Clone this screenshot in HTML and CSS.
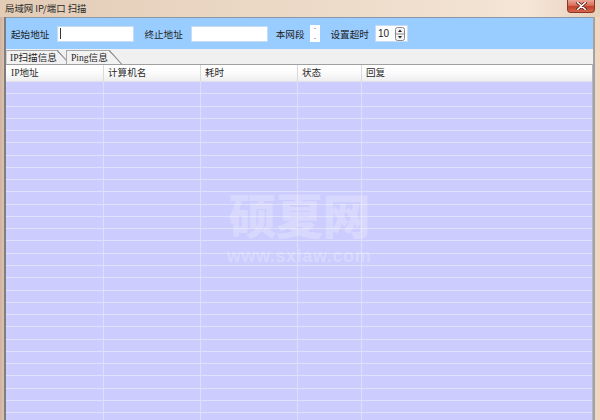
FILE: index.html
```html
<!DOCTYPE html>
<html>
<head>
<meta charset="utf-8">
<title>局域网 IP/端口 扫描</title>
<link rel="stylesheet" href="styles.css">
</head>
<body>
<div class="window">
  <div class="titlebar">
    <span class="title">局域网 IP/端口 扫描</span>
    <div class="close">
      <svg width="11" height="8" viewBox="0 0 11 8"><path d="M1.5 0.5 L9.5 7.5 M9.5 0.5 L1.5 7.5" stroke="#5a1a10" stroke-width="3" stroke-linecap="round"/><path d="M1.5 0.5 L9.5 7.5 M9.5 0.5 L1.5 7.5" stroke="#ffffff" stroke-width="1.6" stroke-linecap="round"/></svg>
    </div>
  </div>
  <div class="frame">
    <div class="client">
      <div class="toolbar">
        <span class="label">起始地址</span>
        <div class="field wide"><span class="caret"></span></div>
        <span class="label gap-l">终止地址</span>
        <div class="field wide"></div>
        <span class="label">本网段</span>
        <div class="mini-spin">
          <svg width="10" height="17" viewBox="0 0 10 17"><path d="M4 4 L5 3 L6 4 Z" fill="#6b6b6b"/><path d="M4 13 L5 14 L6 13 Z" fill="#6b6b6b"/></svg>
        </div>
        <span class="label gap-l2">设置超时</span>
        <div class="field num">
          <span class="num-val">10</span>
          <svg class="spin-btn" width="10" height="14" viewBox="0 0 10 14"><rect x="0.5" y="0.5" width="9" height="13" rx="2" fill="#f4f4f4" stroke="#8a8a8a"/><line x1="1" y1="7" x2="9" y2="7" stroke="#8a8a8a"/><path d="M3 5 L5 2.5 L7 5 Z" fill="#222"/><path d="M3 9 L5 11.5 L7 9 Z" fill="#222"/></svg>
        </div>
      </div>
      <div class="tabs">
        <div class="tab tab-first">IP扫描信息</div>
        <div class="tab tab-second">Ping信息</div>
      </div>
      <div class="grid">
        <div class="head">
          <div class="hc first">IP地址</div>
          <div class="hc">计算机名</div>
          <div class="hc">耗时</div>
          <div class="hc">状态</div>
          <div class="hc last">回复</div>
        </div>
        <div class="rows">
          <div class="row"><i></i><i></i><i></i><i></i><i></i></div>
          <div class="row"><i></i><i></i><i></i><i></i><i></i></div>
          <div class="row"><i></i><i></i><i></i><i></i><i></i></div>
          <div class="row"><i></i><i></i><i></i><i></i><i></i></div>
          <div class="row"><i></i><i></i><i></i><i></i><i></i></div>
          <div class="row"><i></i><i></i><i></i><i></i><i></i></div>
          <div class="row"><i></i><i></i><i></i><i></i><i></i></div>
          <div class="row"><i></i><i></i><i></i><i></i><i></i></div>
          <div class="row"><i></i><i></i><i></i><i></i><i></i></div>
          <div class="row"><i></i><i></i><i></i><i></i><i></i></div>
          <div class="row"><i></i><i></i><i></i><i></i><i></i></div>
          <div class="row"><i></i><i></i><i></i><i></i><i></i></div>
          <div class="row"><i></i><i></i><i></i><i></i><i></i></div>
          <div class="row"><i></i><i></i><i></i><i></i><i></i></div>
          <div class="row"><i></i><i></i><i></i><i></i><i></i></div>
          <div class="row"><i></i><i></i><i></i><i></i><i></i></div>
          <div class="row"><i></i><i></i><i></i><i></i><i></i></div>
          <div class="row"><i></i><i></i><i></i><i></i><i></i></div>
          <div class="row"><i></i><i></i><i></i><i></i><i></i></div>
          <div class="row"><i></i><i></i><i></i><i></i><i></i></div>
          <div class="row"><i></i><i></i><i></i><i></i><i></i></div>
          <div class="row"><i></i><i></i><i></i><i></i><i></i></div>
          <div class="row"><i></i><i></i><i></i><i></i><i></i></div>
          <div class="row"><i></i><i></i><i></i><i></i><i></i></div>
          <div class="row"><i></i><i></i><i></i><i></i><i></i></div>
          <div class="row"><i></i><i></i><i></i><i></i><i></i></div>
          <div class="row"><i></i><i></i><i></i><i></i><i></i></div>
          <div class="row"><i></i><i></i><i></i><i></i><i></i></div>
        </div>
        <div class="watermark">
          <div class="wm-big">硕夏网</div>
          <div class="wm-small">www.sxiaw.com</div>
        </div>
      </div>
    </div>
  </div>
</div>
</body>
</html>
```
FILE: styles.css
```css
html, body {
  margin: 0;
  padding: 0;
}
body {
  width: 600px;
  height: 420px;
  overflow: hidden;
  font-family: "Noto Sans CJK SC", sans-serif;
  font-size: 9.6px;
  color: #1e1e1e;
}
.window {
  width: 600px;
  height: 420px;
  display: flex;
  flex-direction: column;
  background: linear-gradient(to right, #cdb3a0 0px, #d9c0ad 3px, #e9d2bf 60%, #f1d7bf 100%);
}
.titlebar {
  height: 17px;
  display: flex;
  align-items: flex-start;
  background: linear-gradient(to right, #e3ccb6 0%, #ead7c4 40%, #f2e2d2 80%, #f5e6d8 88%, #e8d0ba 100%);
  flex-shrink: 0;
}
.title {
  margin-left: 5px;
  line-height: 17px;
  font-size: 9.4px;
  color: #2a2a2a;
}
.close {
  margin-left: auto;
  margin-right: 5px;
  width: 28px;
  height: 13px;
  box-sizing: border-box;
  border: 1px solid #8b3526;
  border-top: none;
  border-radius: 0 0 4px 4px;
  background: linear-gradient(to bottom, #e9a697 0%, #d8705a 45%, #c2412b 55%, #d5664c 100%);
  display: flex;
  align-items: center;
  justify-content: center;
}
.frame {
  flex: 1;
  display: flex;
  padding: 0 5px 0 4px;
  min-height: 0;
}
.client {
  flex: 1;
  display: flex;
  flex-direction: column;
  border-left: 2px solid #7e7e7e;
  border-right: 2px solid #a2a2a2;
  background: #f0f0f0;
  min-height: 0;
}
.toolbar {
  height: 32px;
  flex-shrink: 0;
  box-sizing: border-box;
  border-top: 1px solid #8d98a6;
  background: #99ccff;
  display: flex;
  align-items: center;
  padding-left: 5px;
}
.label {
  line-height: 14px;
  color: #1e1e1e;
  white-space: nowrap;
}
.field {
  height: 16px;
  box-sizing: border-box;
  background: #ffffff;
  border: 1px solid #c6dcf2;
  display: flex;
  align-items: center;
}
.wide {
  width: 77px;
  margin: 0 8px 0 8px;
}
.gap-l { margin-left: 2px; }
.gap-l2 { margin-left: 11px; }
.caret {
  width: 1px;
  height: 11px;
  margin-left: 2px;
  background: #333;
}
.mini-spin {
  width: 10px;
  height: 17px;
  margin-left: 5px;
  background: #ffffff;
  display: flex;
}
.num {
  width: 33px;
  height: 17px;
  margin-left: 6px;
  padding-left: 2px;
  justify-content: space-between;
  padding-right: 2px;
}
.num-val {
  font-family: "Liberation Sans", sans-serif;
  font-size: 10px;
  line-height: 14px;
  color: #222;
}
.spin-btn {
  display: block;
}
.tabs {
  height: 15px;
  flex-shrink: 0;
  display: flex;
  align-items: flex-end;
  background: #f0f0f0;
}
.tab {
  position: relative;
  height: 14px;
  box-sizing: border-box;
  border-top: 1px solid #a7a7a7;
  border-left: 1px solid #a7a7a7;
  background: #f2f2f2;
  font-family: "Liberation Serif", "Noto Sans CJK SC", serif;
  font-size: 9.6px;
  line-height: 13px;
  color: #1e1e1e;
  white-space: nowrap;
  clip-path: polygon(0 0, calc(100% - 13px) 0, 100% 100%, 0 100%);
}
.tab::after {
  content: "";
  position: absolute;
  right: 0;
  top: -1px;
  width: 14px;
  height: 15px;
  background: linear-gradient(to top right, transparent calc(50% - 1.2px), #9a9a9a calc(50% - 0.6px), #9a9a9a calc(50% + 0.2px), transparent calc(50% + 0.6px));
}
.tab-first {
  width: 65px;
  padding-left: 3px;
  border-left-color: #d0d0d0;
  z-index: 1;
}
.tab-second {
  width: 57px;
  padding-left: 4px;
  margin-left: -5px;
  z-index: 2;
}
.grid {
  flex: 1;
  position: relative;
  display: flex;
  flex-direction: column;
  min-height: 0;
  overflow: hidden;
  border-top: 1px solid #a0a0a0;
  border-right: 1px solid #aeb7cc;
}
.head {
  height: 16px;
  flex-shrink: 0;
  display: grid;
  grid-template-columns: 98px 97px 97px 64px 1fr;
  background: linear-gradient(to bottom, #ffffff 0%, #fbfbfb 50%, #eeeef0 100%);
  border-bottom: 1px solid #e2e2e8;
}
.hc {
  padding-left: 4px;
  border-right: 1px solid #dadada;
  font-family: "Liberation Serif", "Noto Sans CJK SC", serif;
  font-size: 9.6px;
  line-height: 16px;
  color: #2a2a2a;
  white-space: nowrap;
}
.hc.first { padding-left: 5px; }
.hc.last { border-right: none; }
.rows {
  flex: 1;
  background: #ccccff;
}
.row {
  height: 12.27px;
  box-sizing: border-box;
  display: grid;
  grid-template-columns: 98px 97px 97px 64px 1fr;
  border-bottom: 1px solid #e1e1fb;
}
.row i {
  border-right: 1px solid #dedefa;
}
.row i:last-child {
  border-right: none;
}
.watermark {
  position: absolute;
  left: 0;
  right: 0;
  top: 124px;
  text-align: center;
  color: rgba(255, 255, 255, 0.25);
  pointer-events: none;
}
.wm-big {
  font-family: "Noto Sans CJK SC", sans-serif;
  font-weight: 900;
  font-size: 48px;
  line-height: 48px;
  letter-spacing: -1px;
}
.wm-small {
  font-family: "Liberation Sans", sans-serif;
  font-weight: 700;
  font-size: 18px;
  line-height: 18px;
  letter-spacing: 0.6px;
  margin-top: 10px;
}
```
